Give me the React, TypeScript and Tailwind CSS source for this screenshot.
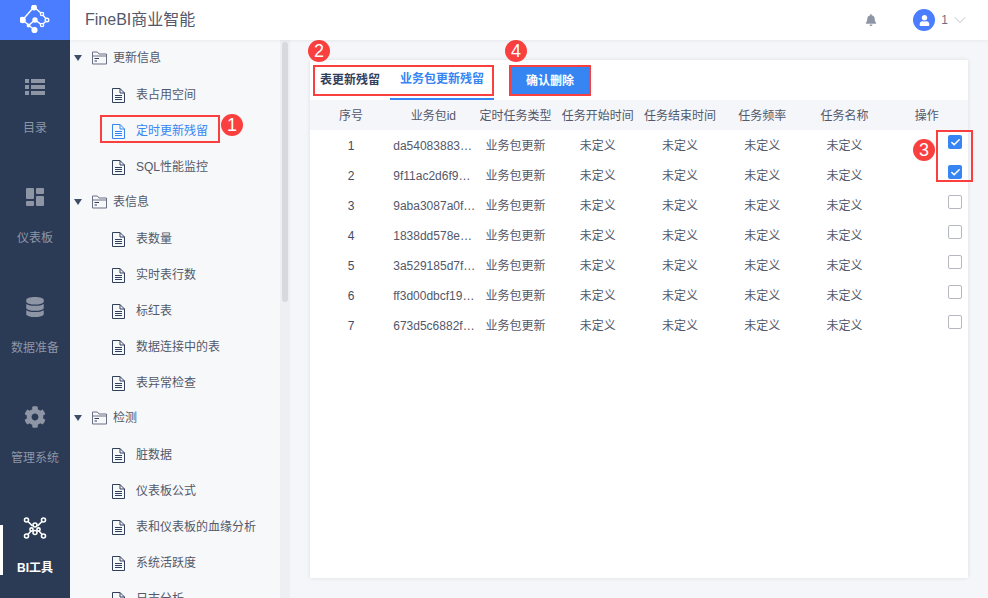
import { ChevronDown, Check } from "lucide-react";
import { FaBell, FaCog, FaDatabase, FaUser } from "react-icons/fa";

const font = "font-['Liberation_Sans','Noto_Sans_CJK_SC',sans-serif]";

const Logo = () => (
  <svg width="30" height="30" viewBox="0 0 30 30" fill="none" stroke="#fff" strokeWidth="1.4">
    <path d="M14 2 L2.5 15 L14.5 25 M8.5 20.5 L15 15 L22 20 L27 15 L22 9 L14 2" />
    <circle cx="14" cy="2.5" r="2.3" fill="#fff" />
    <circle cx="2.5" cy="15" r="2.6" fill="#fff" />
    <circle cx="14.5" cy="25" r="2.4" fill="#fff" />
    <circle cx="8.5" cy="20.5" r="1.2" fill="#fff" />
    <circle cx="15" cy="15" r="2" fill="#fff" />
    <circle cx="27" cy="15" r="1.8" fill="#4a7dff" />
    <circle cx="22" cy="9" r="1.6" fill="#4a7dff" />
    <circle cx="22" cy="20" r="1.6" fill="#4a7dff" />
  </svg>
);

const ListIcon = () => (
  <svg width="20" height="16" viewBox="0 0 20 16" fill="#8e96a6">
    <rect x="0" y="0" width="4" height="4" />
    <rect x="6" y="0" width="14" height="4" />
    <rect x="0" y="6" width="4" height="4" />
    <rect x="6" y="6" width="14" height="4" />
    <rect x="0" y="12" width="4" height="4" />
    <rect x="6" y="12" width="14" height="4" />
  </svg>
);

const DashIcon = () => (
  <svg width="20" height="20" viewBox="0 0 20 20" fill="#8e96a6">
    <rect x="1" y="1" width="8" height="11" rx="1" />
    <rect x="11" y="1" width="8" height="6" rx="1" />
    <rect x="1" y="14" width="8" height="5" rx="1" />
    <rect x="11" y="9" width="8" height="10" rx="1" />
  </svg>
);

const ToolIcon = () => (
  <svg width="24" height="22" viewBox="0 0 24 22" fill="none" stroke="#fff" strokeWidth="1.6">
    <path d="M3.5 3 L9.5 9 M20.5 3 L14.5 9 M3.5 19 L9 13 M20.5 19 L15 13" />
    <circle cx="3.5" cy="3" r="2" fill="#2b3a55" />
    <circle cx="20.5" cy="3" r="2" fill="#2b3a55" />
    <circle cx="3.5" cy="19" r="2" fill="#2b3a55" />
    <circle cx="20.5" cy="19" r="2" fill="#2b3a55" />
    <circle cx="12" cy="8" r="2" fill="#2b3a55" />
    <circle cx="8.5" cy="12.5" r="1.6" fill="#2b3a55" />
    <circle cx="15.5" cy="12.5" r="1.6" fill="#2b3a55" />
    <circle cx="12" cy="15.5" r="2" fill="#2b3a55" />
  </svg>
);

const FolderIcon = () => (
  <svg width="15" height="14" viewBox="0 0 15 14" fill="none" stroke="#6b6f85" strokeWidth="1">
    <path d="M0.5 13 V1 H5.5 L7 3 H14.5 V13 Z" />
    <path d="M0.5 5 H14.5" />
    <path d="M2.5 7.5 H7 M2.5 10 H5" stroke="#33405c" />
  </svg>
);

const FileIcon = ({ color = "#33405c" }: { color?: string }) => (
  <svg width="13" height="15" viewBox="0 0 13 15" fill="none" stroke={color} strokeWidth="1">
    <path d="M0.5 0.5 H8 L12.5 5 V14.5 H0.5 Z" />
    <path d="M8 0.5 V5 H12.5" />
    <path d="M3 7.5 H10 M3 9.5 H10 M3 11.5 H10" />
  </svg>
);

const navItems = [
  { label: "目录", icon: <ListIcon /> },
  { label: "仪表板", icon: <DashIcon /> },
  { label: "数据准备", icon: <FaDatabase size={20} color="#8e96a6" /> },
  { label: "管理系统", icon: <FaCog size={22} color="#8e96a6" /> },
];

const tree = [
  { title: "更新信息", items: ["表占用空间", "定时更新残留", "SQL性能监控"] },
  { title: "表信息", items: ["表数量", "实时表行数", "标红表", "数据连接中的表", "表异常检查"] },
  { title: "检测", items: ["脏数据", "仪表板公式", "表和仪表板的血缘分析", "系统活跃度", "日志分析"] },
];

const columns = ["序号", "业务包id", "定时任务类型", "任务开始时间", "任务结束时间", "任务频率", "任务名称", "操作"];

const rows = [
  "da54083883…",
  "9f11ac2d6f9…",
  "9aba3087a0f…",
  "1838dd578e…",
  "3a529185d7f…",
  "ff3d00dbcf19…",
  "673d5c6882f…",
];

const Badge = ({ n, className }: { n: number; className: string }) => (
  <div className={`absolute w-[22px] h-[22px] rounded-full bg-[#f9403f] text-white text-[18px] leading-[22px] text-center ${className}`}>
    {n}
  </div>
);

const Checkbox = ({ checked }: { checked: boolean }) =>
  checked ? (
    <div className="w-[14px] h-[14px] rounded-[2px] bg-[#3685f2] flex items-center justify-center">
      <Check size={11} stroke="#fff" strokeWidth={3.5} />
    </div>
  ) : (
    <div className="w-[14px] h-[14px] rounded-[2px] border border-[#b5b8c0] bg-white" />
  );

export default function App() {
  return (
    <div className={`flex h-[598px] w-[988px] overflow-hidden relative text-xs text-[#3d4d66] ${font}`}>
      {/* Sidebar */}
      <div className="w-[70px] shrink-0 bg-[#2b3a55] flex flex-col">
        <div className="h-10 bg-[#4a7dff] flex items-center justify-center">
          <Logo />
        </div>
        {navItems.map((item) => (
          <div key={item.label} className="h-[110px] flex flex-col items-center pt-[36px] text-[#8e96a6]">
            <div className="h-[22px] flex items-center justify-center">{item.icon}</div>
            <span className="mt-[23px] leading-[14px]">{item.label}</span>
          </div>
        ))}
        <div className="h-[110px] flex flex-col items-center pt-[37px] text-white font-bold relative">
          <div className="absolute left-0 top-[45px] w-[3px] h-[50px] bg-white" />
          <div className="h-[22px] flex items-center justify-center">
            <ToolIcon />
          </div>
          <span className="mt-[22px] leading-[14px]">BI工具</span>
        </div>
      </div>

      <div className="flex-1 flex flex-col min-w-0">
        {/* Top bar */}
        <div className="h-10 shrink-0 bg-white flex items-center pl-[15px] pr-[18px] z-10 shadow-[0_1px_3px_rgba(0,0,0,0.06)]">
          <span className="text-[16px] text-[#53586a]">FineBI商业智能</span>
          <FaBell size={12} color="#8e96a6" className="ml-auto" />
          <div className="ml-[36px] w-[22px] h-[22px] rounded-full bg-[#4a7dff] flex items-center justify-center">
            <FaUser size={11} color="#fff" />
          </div>
          <span className="ml-[6px] text-[#6b6f85]">1</span>
          <ChevronDown size={20} stroke="#b5b8c0" strokeWidth={1} className="ml-[2px]" />
        </div>

        <div className="flex-1 flex min-h-0 bg-[#f5f6f9]">
          {/* Tree panel */}
          <div className="w-[220px] shrink-0 bg-[#f7f8fa] overflow-hidden flex relative">
            <div className="flex-1 pt-[1px]">
              {tree.map((group) => (
                <div key={group.title}>
                  <div className="h-9 flex items-center pb-[2px]">
                    <div className="ml-[4px] w-0 h-0 border-x-[4px] border-x-transparent border-t-[6px] border-t-[#3d4d66]" />
                    <span className="ml-[10px]"><FolderIcon /></span>
                    <span className="ml-[6px] text-[#53586a]">{group.title}</span>
                  </div>
                  {group.items.map((item) => {
                    const active = item === "定时更新残留";
                    return (
                      <div key={item} className="h-9 flex items-center pl-[42px]">
                        <FileIcon color={active ? "#3685f2" : "#33405c"} />
                        <span className={`ml-[11px] ${active ? "text-[#3685f2]" : "text-[#53586a]"}`}>{item}</span>
                      </div>
                    );
                  })}
                </div>
              ))}
            </div>
            <div className="w-[10px] bg-[#eeeff2] flex justify-center shrink-0">
              <div className="w-[6px] h-[260px] rounded-full bg-[#d8d9de] mt-[2px]" />
            </div>
          </div>

          {/* Main content */}
          <div className="flex-1 pl-[20px] pr-[20px] pt-[20px] pb-[20px]">
            <div className="h-[518px] bg-white shadow-[0_0_4px_rgba(0,0,0,0.1)]">
              <div className="h-10 flex items-end pl-[10px]">
                <div className="h-10 flex items-center font-bold text-[#33405c] w-[70px]">表更新残留</div>
                <div className="h-10 w-[104px] border-b-[2px] border-[#3685f2] flex items-center justify-center font-bold text-[#3685f2]">
                  业务包更新残留
                </div>
                <div className="ml-[15px] mb-[5px] w-[82px] h-[30px] pt-[2px] bg-[#3685f2] text-white font-bold flex items-center justify-center self-end">
                  确认删除
                </div>
              </div>
              <div className="grid grid-cols-8 h-[30px] pt-[1px] bg-[#f5f6f9] items-center text-center text-[#53586a]">
                {columns.map((c) => (
                  <div key={c} className="whitespace-nowrap">{c}</div>
                ))}
              </div>
              {rows.map((id, i) => (
                <div key={id} className="grid grid-cols-8 h-[30px] pt-[2px] items-center text-center relative text-[#53586a]">
                  <div className="text-[#3d4d66]">{i + 1}</div>
                  <div className="whitespace-nowrap text-left pl-px">{id}</div>
                  <div>业务包更新</div>
                  <div>未定义</div>
                  <div>未定义</div>
                  <div>未定义</div>
                  <div>未定义</div>
                  <div />
                  <div className="absolute right-[6px] top-[5px]">
                    <Checkbox checked={i < 2} />
                  </div>
                </div>
              ))}
            </div>
          </div>
        </div>
      </div>

      {/* Red annotation boxes */}
      <div className="absolute left-[100px] top-[115px] w-[120px] h-[28px] border-2 border-[#f9403f]" />
      <div className="absolute left-[313px] top-[65px] w-[181px] h-[31px] border-2 border-[#f9403f]" />
      <div className="absolute left-[509px] top-[65px] w-[82px] h-[31px] border-2 border-[#f9403f]" />
      <div className="absolute left-[936px] top-[130px] w-[37px] h-[52px] border-2 border-[#f9403f]" />
      <Badge n={1} className="left-[221px] top-[114px]" />
      <Badge n={2} className="left-[308px] top-[40px]" />
      <Badge n={3} className="left-[913px] top-[139px]" />
      <Badge n={4} className="left-[505px] top-[40px]" />
    </div>
  );
}
